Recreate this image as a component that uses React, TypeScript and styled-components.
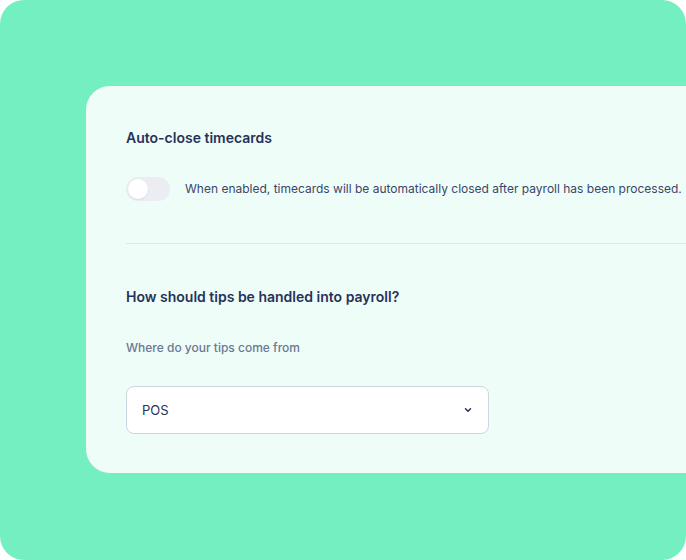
import React from 'react';
import styled, { createGlobalStyle } from 'styled-components';

const GlobalStyle = createGlobalStyle`
  html, body {
    margin: 0;
    padding: 0;
    background: #ffffff;
  }

  body {
    font-family: Inter, "Noto Sans", sans-serif;
    -webkit-font-smoothing: antialiased;
  }
`;

const Frame = styled.div`
  width: 686px;
  height: 560px;
  background: #74efc2;
  border-radius: 24px;
  overflow: hidden;
  padding: 86px 0 0 86px;
  box-sizing: border-box;
`;

const Card = styled.section`
  width: 660px;
  height: 387px;
  box-sizing: border-box;
  background: #effdf8;
  border-radius: 24px 0 0 24px;
  padding: 42px 0 0 40px;
`;

const Title = styled.h2`
  margin: 0;
  font-size: 14px;
  line-height: 20px;
  font-weight: 600;
  color: #26325a;
`;

const ToggleRow = styled.div`
  display: flex;
  align-items: center;
  gap: 15px;
  margin-top: 29px;
  white-space: nowrap;
`;

const Toggle = styled.button<{ on: boolean }>`
  position: relative;
  flex: none;
  width: 44px;
  height: 24px;
  padding: 0;
  border: none;
  border-radius: 12px;
  background: ${({ on }) => (on ? '#2b3a67' : '#ebedf2')};
  cursor: pointer;

  &::after {
    content: '';
    position: absolute;
    top: 2px;
    left: ${({ on }) => (on ? '22px' : '2px')};
    width: 20px;
    height: 20px;
    border-radius: 50%;
    background: #ffffff;
    box-shadow: 0 1px 2px rgba(30, 40, 70, 0.08);
  }
`;

const Description = styled.p`
  margin: 0;
  font-size: 12px;
  line-height: 20px;
  color: #3a4668;
`;

const Divider = styled.hr`
  margin: 42px 0 0;
  border: none;
  border-top: 1px solid #dbeae4;
`;

const SectionTitle = styled(Title)`
  margin-top: 43px;
`;

const FieldLabel = styled.label`
  display: block;
  margin-top: 32px;
  font-size: 12px;
  line-height: 18px;
  font-weight: 500;
  color: #6b7894;
`;

const Select = styled.div`
  margin-top: 29px;
  width: 363px;
  height: 48px;
  box-sizing: border-box;
  display: flex;
  align-items: center;
  justify-content: space-between;
  padding: 0 14px 0 15px;
  background: #ffffff;
  border: 1px solid #cfd5de;
  border-radius: 8px;
  font-size: 13px;
  color: #26325a;
`;

const Chevron = () => (
  <svg width="12" height="12" viewBox="0 0 12 12" fill="none">
    <path d="M3.5 4.75L6 7.25L8.5 4.75" stroke="#26325a" strokeWidth="1.5" strokeLinecap="round" strokeLinejoin="round" />
  </svg>
);

export default function App() {
  const [autoClose, setAutoClose] = React.useState(false);

  return (
    <>
      <GlobalStyle />
      <Frame>
        <Card>
          <Title>Auto-close timecards</Title>
          <ToggleRow>
            <Toggle on={autoClose} onClick={() => setAutoClose(!autoClose)} aria-label="Auto-close timecards" />
            <Description>
              When enabled, timecards will be automatically closed after payroll has been processed.
            </Description>
          </ToggleRow>
          <Divider />
          <SectionTitle>How should tips be handled into payroll?</SectionTitle>
          <FieldLabel>Where do your tips come from</FieldLabel>
          <Select>
            <span>POS</span>
            <Chevron />
          </Select>
        </Card>
      </Frame>
    </>
  );
}
